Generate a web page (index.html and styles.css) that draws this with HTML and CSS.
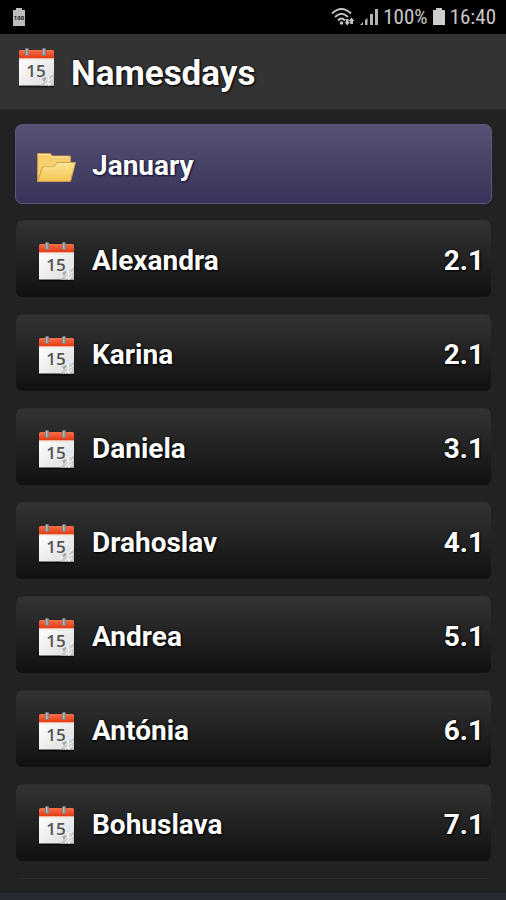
FILE: index.html
```html
<!DOCTYPE html>
<html lang="en">
<head>
  <meta charset="UTF-8">
  <meta name="viewport" content="width=device-width, initial-scale=1">
  <title>Namesdays</title>
  <link rel="stylesheet" href="styles.css">
</head>
<body>
  <!-- shared icons -->
  <svg class="defs" width="0" height="0" aria-hidden="true">
    <defs>
      <linearGradient id="red" x1="0" y1="0" x2="0" y2="1">
        <stop offset="0" stop-color="#f4714c"/>
        <stop offset="1" stop-color="#e2380f"/>
      </linearGradient>
      <linearGradient id="paper" x1="0" y1="0" x2="1" y2="1">
        <stop offset="0" stop-color="#ffffff"/>
        <stop offset="1" stop-color="#dcdcdc"/>
      </linearGradient>
      <linearGradient id="folder" x1="0" y1="0" x2="0" y2="1">
        <stop offset="0" stop-color="#fde48f"/>
        <stop offset="1" stop-color="#f3c558"/>
      </linearGradient>
      <symbol id="calendar" viewBox="0 0 40 42">
        <path d="M3 39.500h35" stroke="#000" stroke-opacity=".5" stroke-width="2"/>
        <path d="M3 10H38V38.500H3z" fill="url(#paper)"/>
        <path d="M3 4.500Q3 3 4.500 3H36.500Q38 3 38 4.500V11.500H3z" fill="url(#red)"/>
        <path d="M3 12h35" stroke="#f7d5ca" stroke-width="1"/>
        <path d="M38 25L24 38.500H38z" fill="#c9c9c9"/>
        <path d="M25 36l3-5 1 3 4-5-1 5 5-3M29 38l3-3 1 3 3-4M34 28l3-2" fill="none" stroke="#f4f4f4" stroke-width="1.200"/>
        <path d="M26 32l3-2 2 1-3 4z" fill="#aaa"/>
        <text class="cal-day" x="20" y="30" text-anchor="middle">15</text>
        <rect x="9" y="1" width="4" height="8" rx="1.500" fill="#808486"/>
        <rect x="10" y="2" width="1.500" height="6" fill="#b4b8ba"/>
        <rect x="26" y="1" width="4" height="8" rx="1.500" fill="#808486"/>
        <rect x="27" y="2" width="1.500" height="6" fill="#b4b8ba"/>
      </symbol>
      <symbol id="folder-open" viewBox="0 0 40 42">
        <path d="M1.500 35V7.500H14.500L16 10H34.500V17L31 35z" fill="#f6cf6d" stroke="#cf9140" stroke-linejoin="round"/>
        <path d="M2.500 8.500H14L15.500 11H33.500" fill="none" stroke="#fff0b0"/>
        <path d="M1.500 35.500L6.500 21H18L21.500 16.500H39.500L34.500 35.500z" fill="url(#folder)" stroke="#cf9a45" stroke-linejoin="round"/>
        <path d="M7.500 22H18.500L22 17.500H38" fill="none" stroke="#fff0ae"/>
      </symbol>
    </defs>
  </svg>

  <div class="app">
    <div class="status">
      <svg class="status-left" viewBox="0 0 14 20" width="14" height="20">
        <path d="M1 3H4V1H10V3H13V19H1z" fill="#bdbdbd"/>
        <text class="charge" x="7" y="13" text-anchor="middle">100</text>
      </svg>
      <svg viewBox="0 0 24 20" width="24" height="20">
        <g fill="none" stroke="#c4c4c4" stroke-width="2">
          <path d="M1 6.500Q10.500 -2.500 20 6.500"/>
          <path d="M4 10Q10.500 3.500 17 10"/>
          <path d="M7 13.500Q10.500 9.500 14 13.500"/>
        </g>
        <circle cx="10.500" cy="16" r="1.800" fill="#c4c4c4"/>
        <path d="M15 12h2.500v3H19L16.200 18.500L13.500 15H15zM19.200 17v-3h-1.700L20.500 10.500l3 3.500H22v3z" fill="#c4c4c4"/>
      </svg>
      <svg viewBox="0 0 18 20" width="18" height="20">
        <path d="M0 18l3-3v3zM5 18v-5l2.500-2v7zM10 18V7h3v11zM15 18V2h3v16z" fill="#b4b4b4"/>
      </svg>
      <span>100%</span>
      <svg viewBox="0 0 12 20" width="12" height="20">
        <path d="M0 4Q0 3 1 3H3V1H9V3H11Q12 3 12 4V18H0z" fill="#cecece"/>
      </svg>
      <span>16:40</span>
    </div>

    <header class="header">
      <svg class="icon"><use href="#calendar"/></svg>
      <h1>Namesdays</h1>
    </header>

    <main class="list">
      <button class="row month" type="button">
        <svg class="icon"><use href="#folder-open"/></svg>
        <span class="name">January</span>
      </button>
      <button class="row" type="button">
        <svg class="icon"><use href="#calendar"/></svg>
        <span class="name">Alexandra</span>
        <span class="date">2.1</span>
      </button>
      <button class="row" type="button">
        <svg class="icon"><use href="#calendar"/></svg>
        <span class="name">Karina</span>
        <span class="date">2.1</span>
      </button>
      <button class="row" type="button">
        <svg class="icon"><use href="#calendar"/></svg>
        <span class="name">Daniela</span>
        <span class="date">3.1</span>
      </button>
      <button class="row" type="button">
        <svg class="icon"><use href="#calendar"/></svg>
        <span class="name">Drahoslav</span>
        <span class="date">4.1</span>
      </button>
      <button class="row" type="button">
        <svg class="icon"><use href="#calendar"/></svg>
        <span class="name">Andrea</span>
        <span class="date">5.1</span>
      </button>
      <button class="row" type="button">
        <svg class="icon"><use href="#calendar"/></svg>
        <span class="name">Antónia</span>
        <span class="date">6.1</span>
      </button>
      <button class="row" type="button">
        <svg class="icon"><use href="#calendar"/></svg>
        <span class="name">Bohuslava</span>
        <span class="date">7.1</span>
      </button>
      <div class="row"></div>
    </main>

    <div class="bottom"></div>
  </div>
</body>
</html>
```

FILE: styles.css
```css
* {
  box-sizing: border-box;
}
body {
  margin: 0;
  background: #222;
  color: #fff;
  font-family: Roboto, "Liberation Sans", sans-serif;
}
.defs {
  position: absolute;
}
.app {
  display: flex;
  flex-direction: column;
  height: 100vh;
}

/* status bar */
.status {
  display: flex;
  flex: none;
  align-items: center;
  gap: 5px;
  height: 34px;
  padding: 0 10px 0 12px;
  background: #000;
  color: #c8c8c8;
  font-family: "Roboto Condensed", Roboto, sans-serif;
  font-size: 21px;
}
.status-left {
  margin-right: auto;
}
.charge {
  font: bold 6px Roboto, sans-serif;
  fill: #111;
}

/* title */
.header {
  display: flex;
  flex: none;
  align-items: center;
  gap: 15px;
  height: 76px;
  padding: 0 16px;
  background: #333;
  border-bottom: 1px solid #2a2a2a;
}
.header .icon {
  margin-bottom: 8px;
}
.header h1 {
  margin: 4px 0 0;
  font-size: 35px;
  line-height: 42px;
  text-shadow: 0 0 2px #000, 1px 1px 2px #000;
}
.icon {
  flex: none;
  width: 40px;
  height: 42px;
}
.cal-day {
  font: 600 17px "Open Sans", "Noto Sans", sans-serif;
  fill: #555;
  text-shadow: none;
}

/* names */
.list {
  display: flex;
  flex: 1;
  flex-direction: column;
  gap: 16px;
  min-height: 0;
  padding: 14px 14px 0 15px;
  overflow: hidden;
}
.row {
  display: flex;
  flex: none;
  align-items: center;
  gap: 16px;
  height: 78px;
  padding: 0 7px 0 20px;
  border: 1px solid #222;
  border-top-color: #2e2e2e;
  border-radius: 7px;
  background: linear-gradient(#333, #111);
  color: #fff;
  font: bold 28px Roboto, "Liberation Sans", sans-serif;
  text-align: left;
  text-shadow: 0 0 2px #000, 1px 1px 2px #000;
}
.row .icon {
  margin-top: 6px;
}
.month {
  height: 80px;
  border-color: #5a567c;
  background: linear-gradient(#575376, #37335a);
  text-shadow: 0 0 2px #113, 1px 1px 2px #113;
}
.name {
  flex: 1;
}
.name,
.date {
  padding-top: 2px;
}
.bottom {
  flex: none;
  height: 21px;
  border-bottom: 7px solid #252a33;
}
```
